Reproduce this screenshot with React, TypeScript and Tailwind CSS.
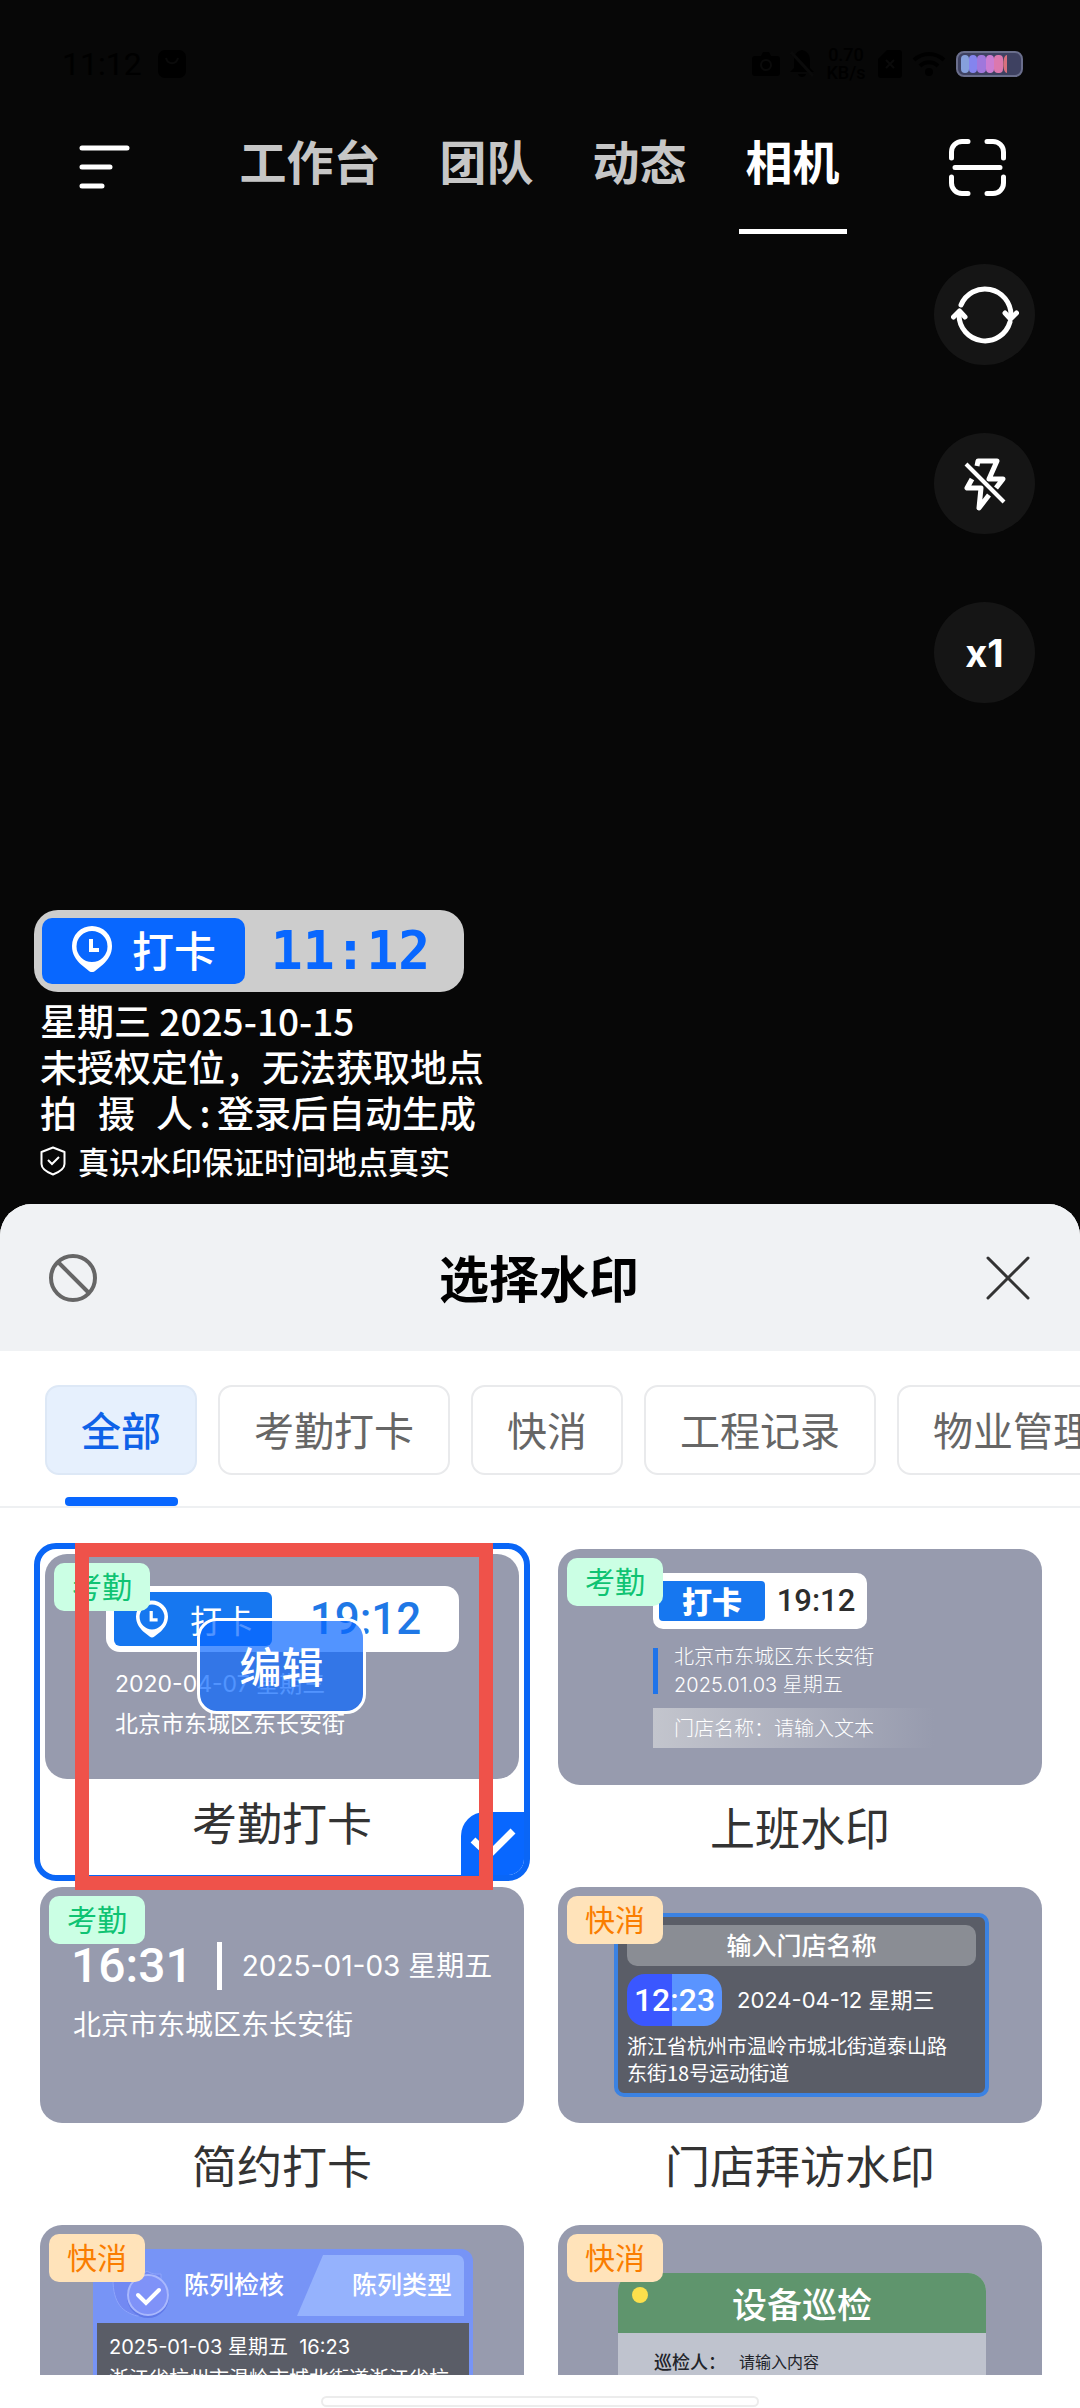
import type { ReactNode } from 'react'
import clsx from 'clsx'

const navItems = ['工作台', '团队', '动态', '相机']
const categories = ['全部', '考勤打卡', '快消', '工程记录', '物业管理']

function PinClock({ className }: { className?: string }) {
  return (
    <svg className={className} viewBox="0 0 40 46" fill="none">
      <path
        fill="currentColor"
        fillRule="evenodd"
        d="M20 0a20 20 0 0 1 20 20c0 8-4 14-9 18.500L23 45a5 5 0 0 1-6 0L9 38.500C4 34 0 28 0 20A20 20 0 0 1 20 0Zm0 5a15.500 15.500 0 1 0 0 31 15.500 15.500 0 0 0 0-31Z"
      />
      <path d="M19 13v11h8" stroke="currentColor" strokeWidth="4" />
    </svg>
  )
}

function StatusBar() {
  return (
    <div className="flex h-[104px] items-center justify-between pt-6 pr-[57px] pl-[62px] text-black">
      <div className="flex items-center gap-4">
        <span className="font-['Roboto',sans-serif] text-[32px] leading-10">11:12</span>
        <svg className="h-[28px] w-[28px]" viewBox="0 0 28 28">
          <rect width="28" height="28" rx="7" fill="currentColor" />
          <path d="M8 8c2 7 10 7 12 0" fill="none" stroke="#0a0a0a" strokeWidth="2" />
        </svg>
      </div>
      <div className="flex items-center gap-[10px]">
        <svg className="h-[24px] w-[28px]" viewBox="0 0 28 24">
          <path fill="currentColor" d="M3 4h6l2-4h6l2 4h6a3 3 0 0 1 3 3v14a3 3 0 0 1-3 3H3a3 3 0 0 1-3-3V7a3 3 0 0 1 3-3Z" />
          <circle cx="14" cy="13" r="5" fill="none" stroke="#0a0a0a" strokeWidth="2" />
        </svg>
        <svg className="h-[28px] w-[24px]" viewBox="0 0 24 28">
          <path fill="currentColor" d="M12 0c5 1 8 5 8 10v8l4 4H0l4-4v-8c0-5 3-9 8-10ZM8 24h8c-1 4-7 4-8 0Z" />
          <path d="m1 2 22 24" stroke="#0a0a0a" strokeWidth="3" />
        </svg>
        <span className="flex w-[44px] flex-col text-center font-['Roboto',sans-serif] text-[18px] leading-[18px] font-medium">
          <span>0.70</span>
          <span>KB/s</span>
        </span>
        <svg className="h-[28px] w-[24px]" viewBox="0 0 24 28">
          <path fill="currentColor" d="M9 0h12a3 3 0 0 1 3 3v22a3 3 0 0 1-3 3H3a3 3 0 0 1-3-3V9Z" />
          <path d="m8 10 8 8m0-8-8 8" stroke="#0a0a0a" strokeWidth="2" />
        </svg>
        <svg className="h-[26px] w-[34px]" viewBox="0 0 34 26" fill="none" stroke="currentColor" strokeWidth="4">
          <path d="M2 9c9-8 21-8 30 0M8 15c5-5 13-5 18 0" />
          <circle cx="17" cy="21" r="2" />
        </svg>
        <svg className="h-[26px] w-[67px]" viewBox="0 0 67 26">
          <rect x="1" y="1" width="65" height="24" rx="7" fill="#3e4161" stroke="#6a6e8c" strokeWidth="2" />
          <rect x="5" y="4" width="8" height="18" rx="4" fill="#86a0dc" />
          <rect x="13" y="4" width="8" height="18" rx="4" fill="#8484ee" />
          <rect x="21" y="4" width="9" height="18" rx="4" fill="#a077dc" />
          <rect x="30" y="4" width="8" height="18" rx="4" fill="#cb7dd2" />
          <rect x="38" y="4" width="9" height="18" rx="4" fill="#dc78ae" />
          <path d="M51 4v18c-5 0-5-18 0-18Z" fill="#d9707e" />
        </svg>
      </div>
    </div>
  )
}

function TopNav() {
  return (
    <header className="flex h-[130px] items-start justify-between pr-[74px] pl-[78px]">
      <button aria-label="菜单" className="mt-[38px]">
        <svg className="h-[50px] w-[52px]" viewBox="0 0 52 50" stroke="#fff" strokeWidth="5" strokeLinecap="round">
          <path d="M4 6h45M4 25h28M4 44h20" />
        </svg>
      </button>
      <nav className="flex h-full gap-[59px]">
        {navItems.map((item) => {
          const active = item === '相机'
          return (
            <a
              key={item}
              href="#"
              className={clsx(
                'relative pt-[26px] text-[47px] leading-[60px] font-bold',
                active ? 'text-white' : 'text-[#c6c6c6]'
              )}
            >
              {item}
              {active && <span className="absolute bottom-0 left-1/2 h-[5px] w-[108px] -translate-x-1/2 bg-white" />}
            </a>
          )
        })}
      </nav>
      <button aria-label="扫一扫" className="mt-[35px]">
        <svg className="h-[57px] w-[57px]" viewBox="0 0 57 57" fill="none" stroke="#fff" strokeWidth="5" strokeLinecap="round">
          <path d="M19 2.500h-6A10.500 10.500 0 0 0 2.500 13v6M38 2.500h6A10.500 10.500 0 0 1 54.500 13v6M19 54.500h-6A10.500 10.500 0 0 1 2.500 44v-6M38 54.500h6A10.500 10.500 0 0 0 54.500 44v-6M6 28.500h45" />
        </svg>
      </button>
    </header>
  )
}

function RoundButton({ label, children }: { label: string; children: ReactNode }) {
  return (
    <button
      aria-label={label}
      className="flex h-[101px] w-[101px] items-center justify-center rounded-full bg-[#151515] text-white"
    >
      {children}
    </button>
  )
}

function CameraTools() {
  return (
    <div className="flex flex-col gap-[68px]">
      <RoundButton label="切换镜头">
        <svg className="h-[58px] w-[68px]" viewBox="0 0 68 58" fill="none" stroke="#fff" strokeWidth="5" strokeLinecap="round" strokeLinejoin="round">
          <path d="M10 19a26 26 0 0 1 50 10M59 36A26 26 0 0 1 8 29" />
          <path d="m54 27 5.500 6 6-6M2.500 31l6-6 5.500 6" />
        </svg>
      </RoundButton>
      <RoundButton label="闪光灯">
        <svg className="h-[54px] w-[42px]" viewBox="0 0 42 54" fill="none" stroke="#fff" strokeWidth="5" strokeLinejoin="round">
          <path d="M13 9l1-5h19l-8 18h14l-7 9M8 22l-5 9h14l-2 20 10-13" />
          <path d="m2 7 38 38" strokeWidth="4" />
        </svg>
      </RoundButton>
      <RoundButton label="变焦">
        <span className="font-['Inter',sans-serif] text-[38px] leading-none font-bold">x1</span>
      </RoundButton>
    </div>
  )
}

function LiveWatermark() {
  return (
    <section className="pb-[17px] text-[37px] leading-[46px] font-medium text-white">
      <div className="mb-[5px] flex h-[82px] w-[430px] items-center rounded-[24px] bg-[#cdcdcd] p-2">
        <div className="flex h-full w-[203px] items-center gap-5 rounded-[10px] bg-[#0867ff] pb-1 pl-[30px]">
          <PinClock className="h-[46px] w-[40px]" />
          <span className="text-[42px] font-medium">打卡</span>
        </div>
        <span className="flex-1 text-center font-['DejaVu_Sans_Mono',monospace] text-[53px] font-bold text-[#0867ff]">
          11:12
        </span>
      </div>
      <div className="pl-[6px]">
        <p>星期三 2025-10-15</p>
        <p>未授权定位，无法获取地点</p>
        <p className="flex">
          <span className="flex gap-[21px]">
            <span>拍</span>
            <span>摄</span>
            <span>人</span>
          </span>
          <span className="w-6 text-center">:</span>
          <span>登录后自动生成</span>
        </p>
        <p className="flex h-[52px] items-center gap-3 text-[31px]">
          <svg className="h-[30px] w-[26px]" viewBox="0 0 26 30" fill="none" stroke="#fff" strokeWidth="2">
            <path d="M13 1.500 24.500 6v12c0 5-5 8-11.500 10.500C6.500 26 1.500 23 1.500 18V6Z" strokeLinejoin="round" />
            <path d="m8 14 4 4 7-7" />
          </svg>
          真识水印保证时间地点真实
        </p>
      </div>
    </section>
  )
}

function Tag({ children }: { children: string }) {
  return (
    <span
      className={clsx(
        'absolute top-[9px] left-[9px] flex h-12 w-24 items-center justify-center rounded-[10px] pb-1 text-[30px]',
        children === '考勤' ? 'bg-[#cbffe4] text-[#0fc373]' : 'bg-[#ffe3ba] text-[#fa7d00]'
      )}
    >
      {children}
    </span>
  )
}

function TemplateCard({ name, tag, children }: { name: string; tag: string; children: ReactNode }) {
  return (
    <article>
      <div className="relative h-[236px] overflow-hidden rounded-[22px] bg-[#979bae] text-white">
        {children}
        <Tag>{tag}</Tag>
      </div>
      <button className="flex h-[88px] w-full items-center justify-center pb-1 text-[45px] text-[#333]">{name}</button>
    </article>
  )
}

function SelectedCard() {
  return (
    <article className="relative -mx-1.5 -mt-1.5 -mb-2">
      <div className="relative h-full overflow-hidden rounded-[22px] border-[6px] border-[#0a66f6] bg-white p-[5px]">
        <div className="relative h-[225px] overflow-hidden rounded-[22px] bg-[#979bae] pt-8 pl-[61px] text-white">
          <div className="flex h-[66px] w-[353px] items-center rounded-[14px] bg-white py-1.5 pl-2">
            <div className="flex h-full w-[158px] items-center gap-[22px] rounded-[6px] bg-[#1677f0] pl-[22px]">
              <PinClock className="h-[38px] w-[32px]" />
              <span className="text-[32px] leading-none">打卡</span>
            </div>
            <span className="flex-1 text-center font-['Roboto',sans-serif] text-[44px] leading-none font-medium text-[#1f78e6]">
              19:12
            </span>
          </div>
          <div className="pt-3 pl-[9px] font-['Inter','Noto_Sans_CJK_SC',sans-serif] text-[23px] leading-10">
            <p>2020-04-07 星期三</p>
            <p>北京市东城区东长安街</p>
          </div>
          <Tag>考勤</Tag>
          <button className="absolute top-16 left-[152px] flex h-24 w-[169px] items-center justify-center rounded-[20px] border-[3px] border-white bg-[#0867ff]/70 pb-1 text-[42px] font-medium">
            编辑
          </button>
        </div>
        <button className="flex h-[90px] w-full items-center justify-center pb-1 text-[45px] text-[#333]">考勤打卡</button>
        <span className="absolute right-0 bottom-0 flex h-[63px] w-[63px] items-center justify-center rounded-tl-[24px] bg-[#0867ff]">
          <svg className="h-[32px] w-[46px]" viewBox="0 0 46 32" fill="none" stroke="#fff" strokeWidth="7">
            <path d="m3 12 16 15L43 3" />
          </svg>
        </span>
      </div>
      {/* highlight frame */}
      <div className="pointer-events-none absolute top-0 right-[37px] left-[41px] z-10 h-[347px] border-[14px] border-[#ef524a]" />
    </article>
  )
}

function ClockInPreview() {
  return (
    <div className="pt-6 pl-[95px] text-[20px]">
      <div className="flex h-14 w-[214px] items-center rounded-[10px] bg-white pl-1.5">
        <span className="flex h-10 w-[106px] items-center justify-center rounded-[4px] bg-[#1677f0] pb-0.5 text-[30px] font-black">
          打卡
        </span>
        <span className="flex-1 text-center font-['Roboto',sans-serif] text-[31px] font-medium text-[#2d2d2d]">
          19:12
        </span>
      </div>
      <div className="mt-[19px] flex h-[46px] items-center border-l-[5px] border-[#1f74ea] pl-4 font-['Inter','Noto_Sans_CJK_SC',sans-serif] leading-7 font-light">
        <div>
          <p>北京市东城区东长安街</p>
          <p>2025.01.03 星期五</p>
        </div>
      </div>
      <p className="mt-[14px] h-10 w-[281px] bg-linear-to-r from-[#c3c5cd] to-[#979bae] pl-[21px] leading-10 font-light">
        门店名称：请输入文本
      </p>
    </div>
  )
}

function SimplePreview() {
  return (
    <div className="pt-[54px] pl-[31px]">
      <div className="flex h-[50px] items-center">
        <span className="font-['Roboto',sans-serif] text-[48px] leading-none font-medium">16:31</span>
        <span className="ml-6 h-12 w-[5px] bg-white" />
        <span className="ml-[20px] font-['Inter','Noto_Sans_CJK_SC',sans-serif] text-[28px] leading-none whitespace-nowrap">
          2025-01-03 星期五
        </span>
      </div>
      <p className="mt-3 pl-[2px] text-[28px] leading-10">北京市东城区东长安街</p>
    </div>
  )
}

function StorePreview() {
  return (
    <div className="pt-[26px] pl-14">
      <div className="h-[184px] w-[375px] rounded-[10px] border-4 border-[#3b82e2] bg-[#5a5d67] px-[9px] pt-2">
        <p className="h-[41px] rounded-[10px] bg-[#8a8d94] text-center text-[25px] leading-[38px] font-medium">
          输入门店名称
        </p>
        <div className="mt-2 flex items-center gap-[15px]">
          <span className="flex h-[52px] w-[95px] items-center justify-center rounded-[18px] bg-linear-to-r from-[#3a57ff] from-[47%] to-[#5a94ff] to-[47%] font-['Roboto',sans-serif] text-[32px] font-medium">
            12:23
          </span>
          <span className="font-['Inter','Noto_Sans_CJK_SC',sans-serif] text-[22px] whitespace-nowrap">
            2024-04-12 星期三
          </span>
        </div>
        <p className="mt-1.5 text-[20px] leading-[27px] whitespace-nowrap">
          浙江省杭州市温岭市城北街道泰山路
          <br />
          东街18号运动街道
        </p>
      </div>
    </div>
  )
}

function DisplayPreview() {
  return (
    <div className="pt-6 pl-[53px]">
      <div className="w-[380px] rounded-t-[12px] bg-[#7794f6] px-1 font-medium">
        <div className="relative flex h-[74px] items-center pb-1">
          <svg className="absolute inset-0 h-full w-full" viewBox="0 0 372 74">
            <path d="M226 6h134a7 7 0 0 1 7 7v54H200Z" fill="#95b2fd" />
            <path d="M16 30c14 0 28-3 34-8 6 4 10 3 14 3v20c0 12-12 20-24 22-14-4-24-12-24-37Z" fill="#7289f2" stroke="#8ea5fb" strokeWidth="1" />
            <circle cx="51" cy="48" r="21" fill="#6079e8" />
            <circle cx="51" cy="46" r="20" fill="#7f92f8" stroke="#a9b8fd" strokeWidth="2" />
            <path d="m41 46 8 8 13-13" fill="none" stroke="#fff" strokeWidth="4" strokeLinecap="round" />
          </svg>
          <span className="relative pl-[87px] text-[25px]">陈列检核</span>
          <span className="relative pl-[68px] text-[25px]">陈列类型</span>
        </div>
        <div className="h-[160px] bg-[#5a5d67] pt-2 pl-3 font-['Inter','Noto_Sans_CJK_SC',sans-serif] text-[20px] leading-8 font-normal whitespace-pre">
          <p>2025-01-03 星期五{'  '}16:23</p>
          <p>浙江省杭州市温岭市城北街道浙江省杭</p>
        </div>
      </div>
    </div>
  )
}

function InspectionPreview() {
  return (
    <div className="pt-12 pl-[60px]">
      <div className="w-[368px] overflow-hidden rounded-t-[18px] bg-[#bfc3ce]">
        <div className="relative bg-[#5f956d] text-center text-[35px] leading-[60px] font-medium">
          设备巡检
          <span className="absolute top-[14px] left-[14px] h-4 w-4 rounded-full bg-[#fbe04c]" />
        </div>
        <p className="flex h-[140px] gap-[5px] pt-3.5 pl-9 text-[18px] leading-7 text-[#22242a]">
          <span className="font-medium">巡检人：</span>
          <span className="pl-2 text-[16px]">请输入内容</span>
        </p>
      </div>
    </div>
  )
}

function WatermarkSheet() {
  return (
    <section className="flex h-1/2 flex-col overflow-hidden rounded-t-[32px] bg-white">
      <div className="flex h-[147px] shrink-0 items-center justify-between bg-[#f0f2f4] pr-[50px] pl-[48px]">
        <button aria-label="不使用水印">
          <svg className="h-[50px] w-[50px]" viewBox="0 0 50 50" fill="none" stroke="#666" strokeWidth="4">
            <circle cx="25" cy="25" r="22" />
            <path d="m10 9 31 31" />
          </svg>
        </button>
        <h1 className="pb-1 text-[50px] leading-none font-bold text-black">选择水印</h1>
        <button aria-label="关闭" className="flex w-[50px] justify-end">
          <svg className="h-[44px] w-[44px]" viewBox="0 0 44 44" stroke="#333" strokeWidth="3" strokeLinecap="round">
            <path d="m2 2 40 40M42 2 2 42" />
          </svg>
        </button>
      </div>

      <div className="flex h-[157px] shrink-0 gap-[21px] overflow-hidden border-b-2 border-[#eef0f2] pt-[34px] pl-[45px]">
        {categories.map((category, i) => (
          <div key={category} className="flex shrink-0 flex-col items-center justify-between">
            <button
              className={clsx(
                'h-[90px] rounded-[14px] border-2 px-[34px] pb-0.5 text-[40px]',
                i === 0 ? 'border-[#dde8f6] bg-[#e6f0fd] font-medium text-[#0f62e8]' : 'border-[#e9eaec] bg-white text-[#666]'
              )}
            >
              {category}
            </button>
            {i === 0 && <span className="h-[9px] w-[113px] rounded-[4px] bg-[#0867ff]" />}
          </div>
        ))}
      </div>

      <div className="min-h-0 flex-1 overflow-hidden pt-[41px] pr-[38px] pl-10">
        <div className="grid auto-rows-[324px] grid-cols-2 gap-x-[34px] gap-y-[14px]">
          <SelectedCard />
          <TemplateCard name="上班水印" tag="考勤">
            <ClockInPreview />
          </TemplateCard>
          <TemplateCard name="简约打卡" tag="考勤">
            <SimplePreview />
          </TemplateCard>
          <TemplateCard name="门店拜访水印" tag="快消">
            <StorePreview />
          </TemplateCard>
          <TemplateCard name="陈列检核" tag="快消">
            <DisplayPreview />
          </TemplateCard>
          <TemplateCard name="设备巡检" tag="快消">
            <InspectionPreview />
          </TemplateCard>
        </div>
      </div>

      <div className="flex h-[33px] shrink-0 justify-center pt-[21px]">
        <span className="h-[11px] w-[438px] rounded-full border-2 border-[#ececec] bg-white" />
      </div>
    </section>
  )
}

export default function App() {
  return (
    <main className="flex h-screen flex-col overflow-hidden bg-[#070707] font-['Noto_Sans_CJK_SC',sans-serif]">
      <div className="flex min-h-0 flex-1 flex-col">
        <StatusBar />
        <TopNav />
        <div className="flex flex-1 justify-between pt-[30px] pr-[45px] pl-[34px]">
          <div className="self-end">
            <LiveWatermark />
          </div>
          <CameraTools />
        </div>
      </div>
      <WatermarkSheet />
    </main>
  )
}
